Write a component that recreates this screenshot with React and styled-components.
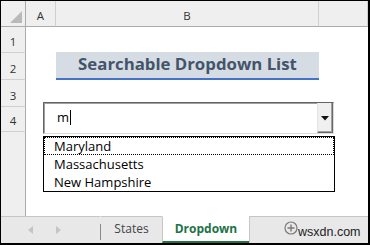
import React from "react";
import styled, { createGlobalStyle } from "styled-components";

const GlobalStyle = createGlobalStyle`
  html, body {
    margin: 0;
    padding: 0;
    background: #fff;
  }
  body {
    font-family: "Open Sans", "Liberation Sans", sans-serif;
  }
`;

const rows = [1, 2, 3, 4];
const states = ["Maryland", "Massachusetts", "New Hampshire"];

const App = () => {
  return (
    <>
      <GlobalStyle />
      <Frame>
        <Sheet>
          <Corner>
            <svg width="14" height="14" viewBox="0 0 14 14">
              <polygon points="13,1 13,13 1,13" fill="#b9b9b9" />
            </svg>
          </Corner>
          <ColHead>A</ColHead>
          <ColHead>B</ColHead>
          <ColHead />
          {rows.map((r) => (
            <React.Fragment key={r}>
              <RowHead>{r}</RowHead>
              <Cell />
              {r === 2 ? <TitleCell>Searchable Dropdown List</TitleCell> : <Cell />}
              <Cell />
            </React.Fragment>
          ))}
          <RowHead $filler />
          <Cell />
          <Cell />
          <Cell />

          <ComboBox>
            <ComboText>
              m<Caret />
            </ComboText>
            <DropButton>
              <svg width="8" height="5" viewBox="0 0 8 5">
                <polygon points="0,0 8,0 4,4.5" fill="#111" />
              </svg>
            </DropButton>
          </ComboBox>
          <ListBox>
            {states.map((s, i) => (
              <ListItem key={s} $focused={i === 0}>
                {s}
              </ListItem>
            ))}
          </ListBox>
        </Sheet>

        <TabBar>
          <NavArea>
            <svg width="5" height="8" viewBox="0 0 5 8">
              <polygon points="5,0 5,8 0,4" fill="#c4c4c4" />
            </svg>
            <svg width="5" height="8" viewBox="0 0 5 8">
              <polygon points="0,0 0,8 5,4" fill="#c4c4c4" />
            </svg>
          </NavArea>
          <Divider />
          <Tab>States</Tab>
          <Tab $active>Dropdown</Tab>
          <TabRest>
            <svg width="14" height="14" viewBox="0 0 14 14">
              <circle cx="7" cy="7" r="6" fill="none" stroke="#7a7a7a" strokeWidth="1.2" />
              <path d="M7 3.5v7M3.5 7h7" stroke="#7a7a7a" strokeWidth="1.4" />
            </svg>
            <Watermark>wsxdn.com</Watermark>
          </TabRest>
        </TabBar>
      </Frame>
    </>
  );
};

export default App;

const Frame = styled.div`
  width: 370px;
  height: 245px;
  box-sizing: border-box;
  border: 1px solid #000;
  border-right-width: 2px;
  border-bottom-width: 2px;
  display: grid;
  grid-template-rows: 1fr 27px;
  background: #fff;
  overflow: hidden;
`;

const Sheet = styled.div`
  position: relative;
  display: grid;
  grid-template-columns: 25px 30px 263px 1fr;
  grid-template-rows: 26px 26px 27px 27px 25px 1fr;
`;

const Corner = styled.div`
  box-sizing: border-box;
  background: #efefef;
  border-right: 1px solid #ababab;
  border-bottom: 1px solid #ababab;
  display: flex;
  align-items: flex-end;
  justify-content: flex-end;
  padding: 0 2px 2px 0;
`;

const ColHead = styled.div`
  box-sizing: border-box;
  background: #efefef;
  border-right: 1px solid #d0d0d0;
  border-bottom: 1px solid #ababab;
  display: flex;
  align-items: center;
  justify-content: center;
  padding-top: 3px;
  font-size: 11.5px;
  color: #333;
`;

const RowHead = styled.div`
  box-sizing: border-box;
  background: #efefef;
  border-right: 1px solid #ababab;
  border-bottom: ${({ $filler }) => ($filler ? "none" : "1px solid #d0d0d0")};
  display: flex;
  align-items: flex-end;
  justify-content: center;
  padding-bottom: 3px;
  font-size: 11.5px;
  color: #333;
`;

const Cell = styled.div`
  background: #fff;
`;

const TitleCell = styled.div`
  box-sizing: border-box;
  margin-top: -1px;
  background: #d6dce4;
  border-bottom: 2px solid #4472c4;
  display: flex;
  align-items: center;
  justify-content: center;
  padding-bottom: 3px;
  font-size: 16.8px;
  font-weight: 700;
  color: #44546a;
`;

const ComboBox = styled.div`
  position: absolute;
  left: 42px;
  top: 101px;
  width: 291px;
  height: 32px;
  box-sizing: border-box;
  display: flex;
  background: #fff;
  border: 1px solid;
  border-color: #646464 #dcdcdc #dcdcdc #646464;
  box-shadow: inset 1px 1px 0 #a0a0a0;
`;

const ComboText = styled.div`
  flex: 1;
  display: flex;
  align-items: center;
  padding-left: 13px;
  padding-bottom: 2px;
  font-size: 13px;
  color: #000;
`;

const Caret = styled.span`
  display: inline-block;
  width: 1px;
  height: 15px;
  margin-left: 1px;
  background: #000;
`;

const DropButton = styled.div`
  width: 16px;
  box-sizing: border-box;
  display: flex;
  align-items: center;
  justify-content: center;
  padding-top: 1px;
  background: #f0f0f0;
  border-left: 1px solid #e3e3e3;
  border-right: 1px solid #696969;
  border-bottom: 1px solid #696969;
  box-shadow: inset -1px -1px 0 #a0a0a0;
`;

const ListBox = styled.div`
  position: absolute;
  left: 42px;
  top: 135px;
  width: 292px;
  height: 56px;
  box-sizing: border-box;
  border: 1px solid #000;
  background: #fff;
  display: flex;
  flex-direction: column;
`;

const ListItem = styled.div`
  height: 18px;
  display: flex;
  align-items: center;
  padding-left: 10px;
  font-size: 13px;
  color: #000;
  outline: ${({ $focused }) => ($focused ? "1px dotted #000" : "none")};
  outline-offset: -1px;
`;

const TabBar = styled.div`
  display: flex;
  background: #e8e8e8;
`;

const NavArea = styled.div`
  width: 99px;
  box-sizing: border-box;
  border-top: 1px solid #c6c6c6;
  display: flex;
  align-items: center;
  gap: 23px;
  padding-left: 27px;
`;

const Divider = styled.div`
  width: 1px;
  margin: 8px 0 3px;
  background: #8a8a8a;
`;

const Tab = styled.div`
  box-sizing: border-box;
  width: ${({ $active }) => ($active ? "87px" : "61px")};
  display: flex;
  align-items: center;
  justify-content: center;
  font-size: 12px;
  font-weight: ${({ $active }) => ($active ? 700 : 400)};
  color: ${({ $active }) => ($active ? "#217346" : "#444")};
  background: ${({ $active }) => ($active ? "#fff" : "transparent")};
  border-top: 1px solid ${({ $active }) => ($active ? "#fff" : "#c6c6c6")};
  border-left: ${({ $active }) => ($active ? "1px solid #c6c6c6" : "none")};
  border-bottom: 2px solid ${({ $active }) => ($active ? "#217346" : "transparent")};
  padding-bottom: 2px;
`;

const TabRest = styled.div`
  flex: 1;
  box-sizing: border-box;
  border-top: 1px solid #c6c6c6;
  border-left: 1px solid #c6c6c6;
  display: flex;
  align-items: flex-start;
  padding: 4px 0 0 34px;
`;

const Watermark = styled.span`
  margin-top: 4px;
  font-family: "Liberation Sans", Arial, sans-serif;
  font-size: 12.5px;
  color: #222;
`;
